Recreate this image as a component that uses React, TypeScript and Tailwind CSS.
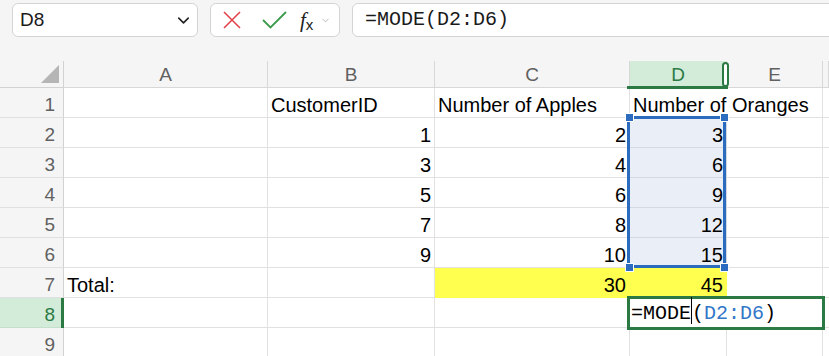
import { ChevronDown } from 'lucide-react'

type Row = {
  n: number
  a?: string
  b?: string
  c?: string
  d?: string
}

const rows: Row[] = [
  { n: 1, b: 'CustomerID', c: 'Number of Apples', d: 'Number of Oranges' },
  { n: 2, b: '1', c: '2', d: '3' },
  { n: 3, b: '3', c: '4', d: '6' },
  { n: 4, b: '5', c: '6', d: '9' },
  { n: 5, b: '7', c: '8', d: '12' },
  { n: 6, b: '9', c: '10', d: '15' },
  { n: 7, a: 'Total:', c: '30', d: '45' },
  { n: 8 },
  { n: 9 },
]

function Cell({ text, right, className = '' }: { text?: string; right?: boolean; className?: string }) {
  return (
    <div
      className={`h-[30px] flex items-end whitespace-nowrap px-[3px] text-[20px] leading-[24px] text-black ${
        right ? 'justify-end' : 'justify-start'
      } ${className}`}
    >
      {text}
    </div>
  )
}

export default function App() {
  return (
    <div className="w-[829px] h-[356px] overflow-hidden bg-[#f5f5f5] font-['Liberation_Sans',Arial,sans-serif]">
      {/* barra de fórmulas */}
      <div className="h-[61px] flex items-start gap-3 pl-3 pt-[3px]">
        <div className="w-[186px] h-[34px] bg-white border border-[#d4d4d4] rounded-md flex items-center justify-between pl-[7px] pr-[4px]">
          <span className="text-[19px] text-[#1a1a1a]">D8</span>
          <ChevronDown size={19} strokeWidth={2} className="text-[#222]" />
        </div>
        <div className="w-[130px] h-[34px] bg-white border border-[#d4d4d4] rounded-md flex items-center pl-[12px]">
          <svg width="18" height="18" viewBox="0 0 18 18" className="mr-[21px]">
            <path d="M1 1 L17 17 M17 1 L1 17" stroke="#e0454b" strokeWidth="1.6" fill="none" />
          </svg>
          <svg width="25" height="18" viewBox="0 0 25 18" className="mr-[13px]">
            <path d="M1 9 L8.5 16.5 L24 1" stroke="#3b9a4c" strokeWidth="1.8" fill="none" />
          </svg>
          <span className="font-['Liberation_Serif',serif] italic text-[21px] text-[#222] leading-none mr-[7px]">
            f<span className="not-italic font-['Liberation_Sans',sans-serif] text-[15px] relative top-[3px]">x</span>
          </span>
          <ChevronDown size={11} strokeWidth={1.5} className="text-[#9a9a9a]" />
        </div>
        <div className="flex-1 -mr-4 h-[34px] bg-white border border-[#d4d4d4] rounded-md flex items-center pl-[12px]">
          <span className="font-['Liberation_Mono',monospace] text-[20px] text-[#1a1a1a]">=MODE(D2:D6)</span>
        </div>
      </div>

      {/* hoja */}
      <div className="relative">
        <div className="grid grid-cols-[64px_204px_167px_195px_97px_96px_1fr]">
          {/* cabecera de columnas */}
          <div className="h-[27px] border-r border-b border-[#d2d2d2] relative">
            <svg width="18" height="18" viewBox="0 0 18 18" className="absolute left-[41px] top-[4px]">
              <path d="M18 0 L18 18 L0 18 Z" fill="#b5b5b5" />
            </svg>
          </div>
          {['A', 'B', 'C', 'D', 'E', ''].map((l) => (
            <div
              key={l || 'F'}
              className={`h-[27px] border-b border-r border-[#d8d8d8] flex items-end justify-center text-[19px] leading-[24px] ${
                l === 'D' ? 'bg-[#d3ecda] text-[#2b7a44]' : 'text-[#616161]'
              }`}
            >
              {l}
            </div>
          ))}

          {rows.map((r) => {
            const sel = r.n >= 2 && r.n <= 6
            const yellow = r.n === 7
            return [
              <div
                key={`h${r.n}`}
                className={`h-[30px] border-r border-b flex items-end justify-end pr-[8px] text-[19px] leading-[24px] ${
                  r.n === 8
                    ? 'bg-[#d3ecda] text-[#2b7a44] border-r-[#d2d2d2] border-b-[#c4dfcc]'
                    : 'text-[#616161] border-r-[#d2d2d2] border-b-[#e0e0e0]'
                }`}
              >
                {r.n}
              </div>,
              <Cell key={`a${r.n}`} text={r.a} className="bg-white border-r border-b border-[#e1e1e1]" />,
              <Cell key={`b${r.n}`} text={r.b} right={r.n > 1} className="bg-white border-r border-b border-[#e1e1e1]" />,
              <Cell
                key={`c${r.n}`}
                text={r.c}
                right={r.n > 1}
                className={`border-r border-b ${yellow ? 'bg-[#ffff4f] border-[#ffff4f]' : 'bg-white border-[#e1e1e1]'}`}
              />,
              r.n === 1 ? (
                <Cell key={`d${r.n}`} text={r.d} className="col-span-2 bg-white border-r border-b border-[#e1e1e1]" />
              ) : (
                <Cell
                  key={`d${r.n}`}
                  text={r.d}
                  right
                  className={`border-r border-b ${
                    sel ? 'bg-[#e9eef7] border-[#d3d9e3]' : yellow ? 'bg-[#ffff4f] border-[#ffff4f]' : 'bg-white border-[#e1e1e1]'
                  }`}
                />
              ),
              r.n === 1 ? null : <Cell key={`e${r.n}`} className="bg-white border-r border-b border-[#e1e1e1]" />,
              <Cell key={`f${r.n}`} className="bg-white border-b border-[#e1e1e1]" />,
            ]
          })}
        </div>

        {/* columna D seleccionada */}
        <div className="absolute left-[627px] top-[25px] w-[101px] h-[3px] bg-[#2b7a44]" />
        <div className="absolute left-[722px] top-[1px] w-[7px] h-[25px] rounded-full border-2 border-[#2b7a44] bg-white" />
        {/* fila 8 */}
        <div className="absolute left-[61px] top-[237px] w-[3px] h-[30px] bg-[#2b7a44]" />

        {/* rango D2:D6 */}
        <div className="absolute left-[627px] top-[55px] w-[99px] h-[152px] border-[3px] border-[#2c6cbf]" />
        <div className="absolute left-[625px] top-[52px] w-[9px] h-[9px] bg-[#2c6cbf] border border-white" />
        <div className="absolute left-[720px] top-[52px] w-[9px] h-[9px] bg-[#2c6cbf] border border-white" />
        <div className="absolute left-[625px] top-[202px] w-[9px] h-[9px] bg-[#2c6cbf] border border-white" />
        <div className="absolute left-[720px] top-[202px] w-[9px] h-[9px] bg-[#2c6cbf] border border-white" />

        {/* celda en edición */}
        <div className="absolute left-[627px] top-[235px] w-[198px] h-[34px] border-[3px] border-[#2b7a44] bg-white flex items-end pl-[1px]">
          <span className="font-['Liberation_Mono',monospace] text-[20px] leading-[26px] text-black whitespace-nowrap">
            =MODE
            <span className="inline-block w-0 h-[27px] border-l-[1.5px] border-black align-[-5px]" />
            (<span className="text-[#3277c8]">D2:D6</span>)
          </span>
        </div>
      </div>
    </div>
  )
}
